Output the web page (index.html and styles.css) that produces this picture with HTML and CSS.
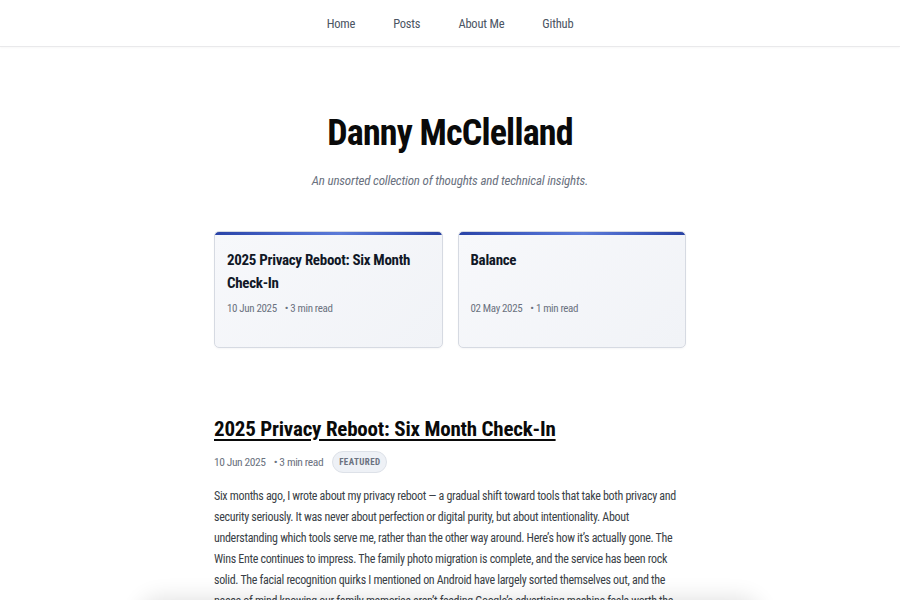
FILE: index.html
```html
<!DOCTYPE html>
<html lang="en">
<head>
<meta charset="utf-8">
<title>Danny McClelland</title>
<link rel="stylesheet" href="styles.css">
</head>
<body>
<nav class="site-nav">
  <a href="#">Home</a>
  <a href="#">Posts</a>
  <a href="#">About Me</a>
  <a href="#">Github</a>
</nav>
<main class="page">
  <header class="hero">
    <h1 class="hero-title">Danny McClelland</h1>
    <p class="hero-sub">An unsorted collection of thoughts and technical insights.</p>
  </header>
  <section class="cards">
    <a class="card" href="#">
      <h2 class="card-title">2025 Privacy Reboot: Six Month Check-In</h2>
      <div class="meta card-meta"><span>10 Jun 2025</span><span class="dot">• 3 min read</span></div>
    </a>
    <a class="card" href="#">
      <h2 class="card-title">Balance</h2>
      <div class="meta card-meta"><span>02 May 2025</span><span class="dot">• 1 min read</span></div>
    </a>
  </section>
  <article class="post">
    <h2 class="post-title"><a href="#">2025 Privacy Reboot: Six Month Check-In</a></h2>
    <div class="meta post-meta"><span>10 Jun 2025</span><span class="dot">• 3 min read</span><span class="badge">FEATURED</span></div>
    <p class="post-body">Six months ago, I wrote about my privacy reboot — a gradual shift toward tools that take both privacy and security seriously. It was never about perfection or digital purity, but about intentionality. About understanding which tools serve me, rather than the other way around. Here’s how it’s actually gone. The Wins Ente continues to impress. The family photo migration is complete, and the service has been rock solid. The facial recognition quirks I mentioned on Android have largely sorted themselves out, and the peace of mind knowing our family memories aren’t feeding Google’s advertising machine feels worth the effort.</p>
  </article>
</main>
<div class="bottom-shade"></div>
</body>
</html>
```
FILE: styles.css
```css
* { box-sizing: border-box; }
html, body { margin: 0; padding: 0; background: #ffffff; }
body {
  font-family: "Roboto Condensed", Roboto, "Liberation Sans", sans-serif;
  color: #111111;
  overflow: hidden;
}
a { color: inherit; text-decoration: none; }

.site-nav {
  height: 47px;
  display: flex;
  justify-content: center;
  align-items: center;
  gap: 38px;
  border-bottom: 1px solid #e9e9eb;
  box-shadow: 0 1px 2px rgba(0,0,0,0.03);
  font-size: 12.5px;
  letter-spacing: -0.2px;
  color: #4b5563;
  padding-top: 1px;
}

.page {
  width: 472px;
  margin: 0 auto;
}

.hero { text-align: center; }
.hero-title {
  margin: 63px 0 0;
  font-size: 36px;
  line-height: 46px;
  font-weight: 700;
  letter-spacing: -0.8px;
  color: #0a0a0a;
}
.hero-sub {
  margin: 15px 0 0;
  font-size: 13px;
  line-height: 20px;
  font-style: italic;
  color: #6b7280;
  letter-spacing: -0.2px;
}

.cards {
  margin-top: 40px;
  display: grid;
  grid-template-columns: 1fr 1fr;
  gap: 15px;
}
.card {
  display: flex;
  flex-direction: column;
  min-height: 117px;
  padding: 17px 12px 30px;
  border: 1px solid #d6dae2;
  border-radius: 5px;
  background:
    linear-gradient(90deg, #2a44a8 0%, #4a68cc 35%, #5c7bd8 55%, #3f5cc0 80%, #2a43a4 100%) top / 100% 3px no-repeat,
    linear-gradient(135deg, #f7f8fb 0%, #f1f3f7 100%);
  box-shadow: 0 1px 2px rgba(15,23,42,0.04);
}
.card-title {
  margin: 0;
  font-size: 15px;
  line-height: 23px;
  font-weight: 700;
  color: #111827;
  letter-spacing: -0.3px;
}
.card-meta { margin-top: auto; font-size: 11px; letter-spacing: -0.35px; }

.meta {
  display: flex;
  align-items: center;
  color: #6b7280;
  line-height: 16px;
}
.dot { margin-left: 8px; }

.post { margin-top: 67px; }
.post-title {
  margin: 0;
  font-size: 21px;
  line-height: 29px;
  font-weight: 700;
  color: #0a0a0a;
  letter-spacing: -0.2px;
}
.post-title a {
  text-decoration: underline;
  text-decoration-thickness: 2px;
  text-underline-offset: 3px;
}
.post-meta { margin-top: 7px; font-size: 11.5px; letter-spacing: -0.4px; }
.badge {
  margin-left: 9px;
  height: 22px;
  padding: 0 6px;
  display: inline-flex;
  align-items: center;
  border-radius: 11px;
  border: 1px solid #dde1e8;
  background: #eef1f6;
  font-size: 9px;
  font-weight: 700;
  letter-spacing: 0.4px;
  color: #6b7280;
}
.post-body {
  margin: 13px 0 0;
  font-size: 12px;
  line-height: 21px;
  letter-spacing: -0.32px;
  color: #3a3f47;
}

.bottom-shade {
  position: fixed;
  left: 140px;
  right: 140px;
  bottom: -40px;
  height: 40px;
  background: #ffffff;
  box-shadow: 0 -2px 22px rgba(0,0,0,0.12);
  border-radius: 20px;
}
```
